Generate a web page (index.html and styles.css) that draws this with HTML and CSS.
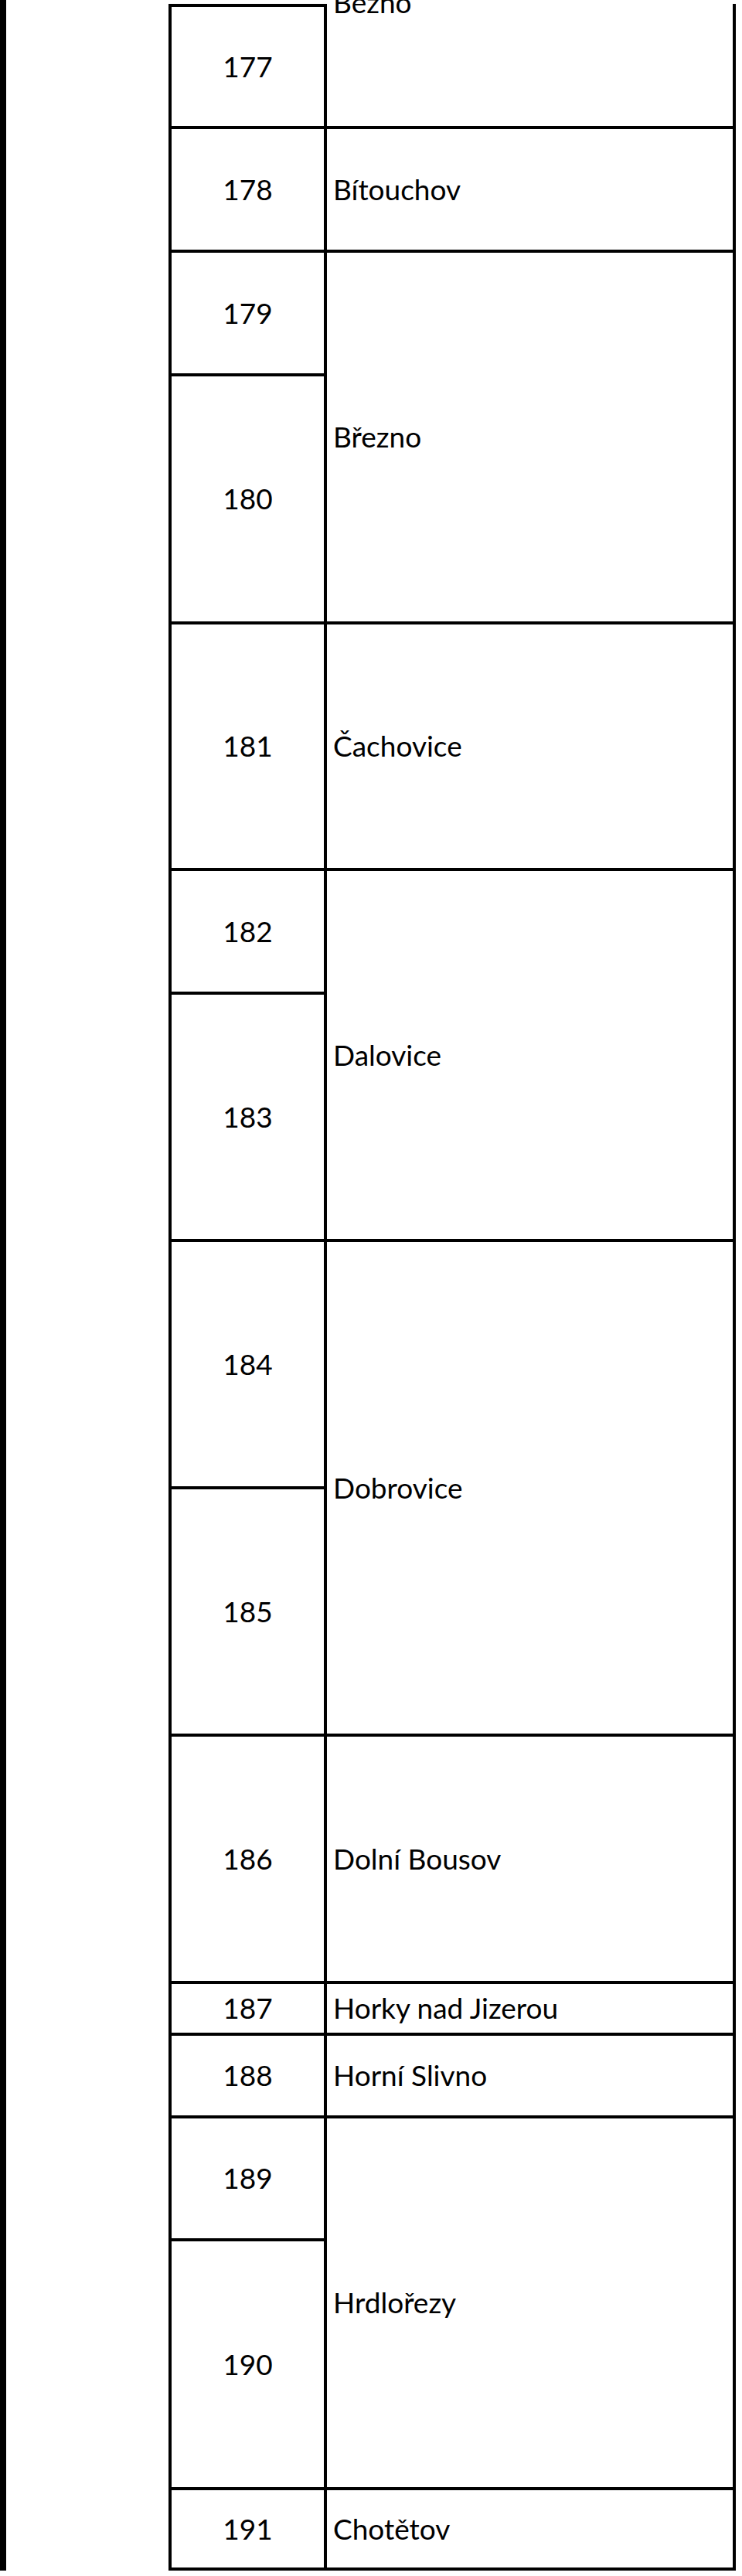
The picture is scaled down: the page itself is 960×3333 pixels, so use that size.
FILE: index.html
```html
<!DOCTYPE html>
<html lang="cs">
<head>
<meta charset="utf-8">
<title>Seznam obcí</title>
<link rel="stylesheet" href="styles.css">
</head>
<body>
<div class="page">
  <div class="sheet">
    <div class="cell num first">177</div>
    <div class="cell name top"><span class="clipped">Bezno</span></div>

    <div class="cell num">178</div>
    <div class="cell name">Bítouchov</div>

    <div class="cell num">179</div>
    <div class="cell name span2">Březno</div>
    <div class="cell num">180</div>

    <div class="cell num">181</div>
    <div class="cell name">Čachovice</div>

    <div class="cell num">182</div>
    <div class="cell name span2">Dalovice</div>
    <div class="cell num">183</div>

    <div class="cell num">184</div>
    <div class="cell name span2">Dobrovice</div>
    <div class="cell num">185</div>

    <div class="cell num">186</div>
    <div class="cell name">Dolní Bousov</div>

    <div class="cell num">187</div>
    <div class="cell name">Horky nad Jizerou</div>

    <div class="cell num">188</div>
    <div class="cell name">Horní Slivno</div>

    <div class="cell num">189</div>
    <div class="cell name span2">Hrdlořezy</div>
    <div class="cell num">190</div>

    <div class="cell num">191</div>
    <div class="cell name">Chotětov</div>
  </div>
</div>
</body>
</html>
```

FILE: styles.css
```css
html, body {
  margin: 0;
  padding: 0;
  background: #ffffff;
}

.page {
  border-left: 8px solid #000000;
  height: 3326px;
  box-sizing: border-box;
  padding-top: 5px;
  padding-left: 210px;
}

.sheet {
  width: 734px;
  box-sizing: border-box;
  display: grid;
  grid-template-columns: 197px 525px;
  grid-template-rows: 158px 156px 156px 317px 315px 156px 316px 316px 316px 316px 63px 103px 155px 318px 100px;
  gap: 4px;
  padding: 0 4px 4px 4px;
  background: #000000;
  font-family: "Lato", "Liberation Sans", sans-serif;
  font-size: 37px;
  line-height: 1.2;
  color: #000000;
}

.cell {
  background: #ffffff;
  display: flex;
  align-items: center;
  box-sizing: border-box;
}

.num {
  grid-column: 1;
  justify-content: center;
}

.name {
  grid-column: 2;
  padding-left: 8px;
}

.span2 {
  grid-row: span 2;
}

.first {
  border-top: 4px solid #000000;
}

.top {
  align-items: flex-start;
}

.clipped {
  margin-top: -24px;
}
```
